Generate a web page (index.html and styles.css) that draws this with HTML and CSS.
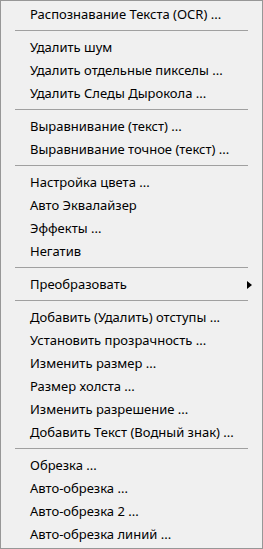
FILE: index.html
```html
<!DOCTYPE html>
<html lang="ru">

<head>
    <meta charset="UTF-8" />
    <meta name="viewport" content="width=device-width, initial-scale=1.0" />
    <title>Меню</title>
    <link rel="stylesheet" href="styles.css">
</head>

<body>

    <div class="menu">
        <div class="item">Распознавание Текста (OCR) ...</div>
        <div class="sep"></div>
        <div class="item">Удалить шум</div>
        <div class="item">Удалить отдельные пикселы ...</div>
        <div class="item">Удалить Следы Дырокола ...</div>
        <div class="sep"></div>
        <div class="item">Выравнивание (текст) ...</div>
        <div class="item">Выравнивание точное (текст) ...</div>
        <div class="sep"></div>
        <div class="item">Настройка цвета ...</div>
        <div class="item">Авто Эквалайзер</div>
        <div class="item">Эффекты ...</div>
        <div class="item">Негатив</div>
        <div class="sep"></div>
        <div class="item submenu">Преобразовать<span class="arrow"></span></div>
        <div class="sep"></div>
        <div class="item">Добавить (Удалить) отступы ...</div>
        <div class="item">Установить прозрачность ...</div>
        <div class="item">Изменить размер ...</div>
        <div class="item">Размер холста ...</div>
        <div class="item">Изменить разрешение ...</div>
        <div class="item">Добавить Текст (Водный знак) ...</div>
        <div class="sep"></div>
        <div class="item">Обрезка ...</div>
        <div class="item">Авто-обрезка ...</div>
        <div class="item">Авто-обрезка 2 ...</div>
        <div class="item">Авто-обрезка линий ...</div>
    </div>

</body>

</html>
```

FILE: styles.css
```css
html,
body {
    margin: 0;
    padding: 0;
}

body {
    font-family: "Noto Sans", "Open Sans", sans-serif;
    font-size: 13px;
    color: #000;
}

.menu {
    width: 263px;
    height: 549px;
    box-sizing: border-box;
    background: #f0f0f0;
    border: 1px solid #979797;
    padding: 2px 0;
    display: flex;
    flex-direction: column;
}

.item {
    height: 23px;
    line-height: 23px;
    padding-left: 29px;
    white-space: nowrap;
    display: flex;
    align-items: center;
}

.submenu {
    justify-content: space-between;
    padding-right: 10px;
}

.arrow {
    width: 0;
    height: 0;
    border-top: 4px solid transparent;
    border-bottom: 4px solid transparent;
    border-left: 5px solid #000;
}

.sep {
    height: 1px;
    background: #a0a0a0;
    margin: 4px 14px 5px 14px;
}
```
